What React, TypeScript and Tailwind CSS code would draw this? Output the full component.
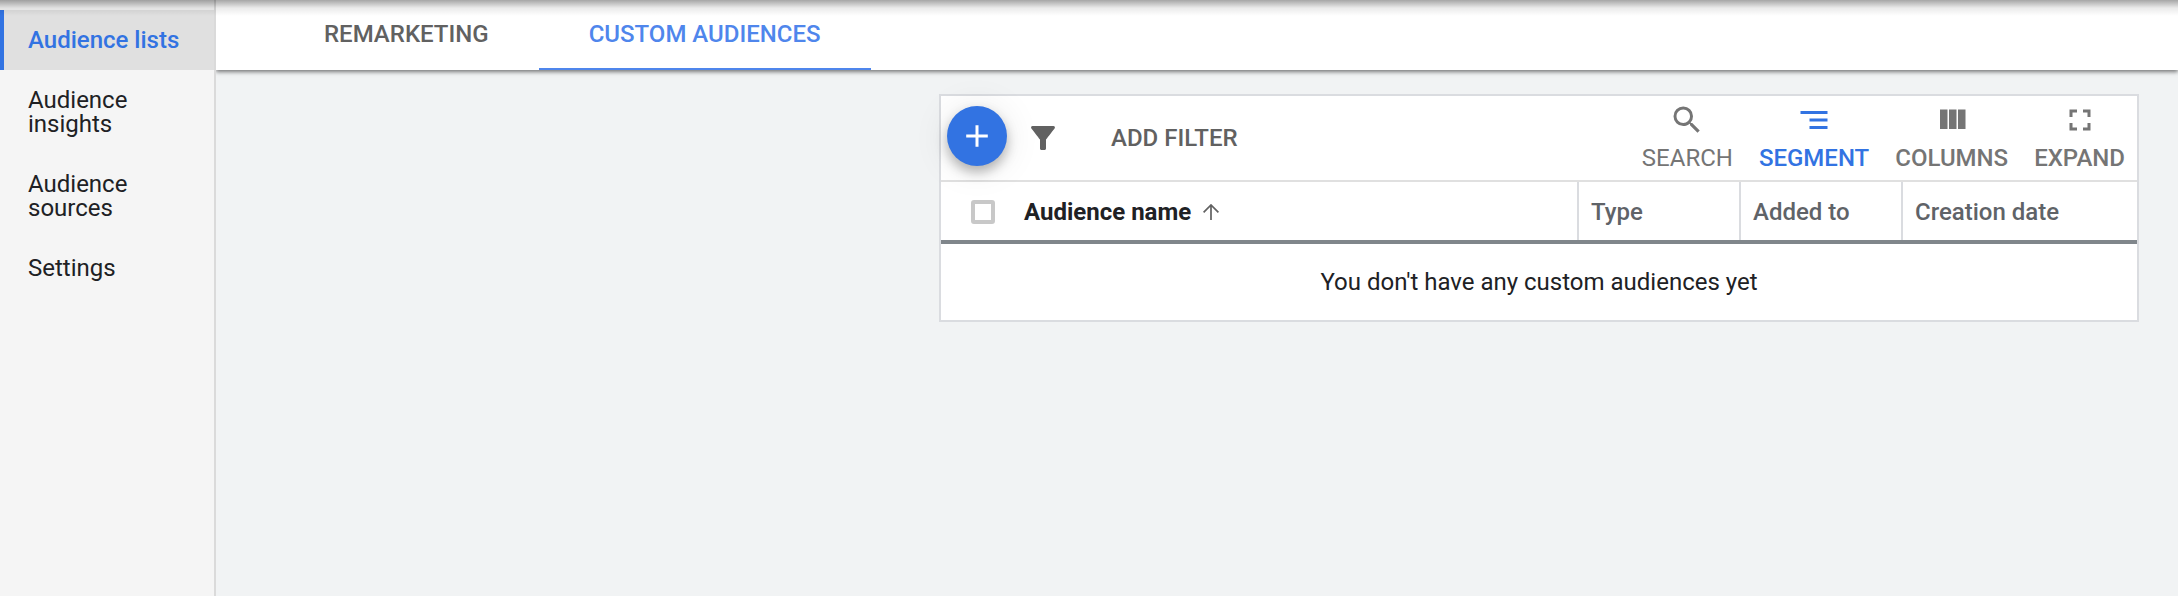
import React, { useState } from 'react';

const sideItems = ['Audience lists', 'Audience insights', 'Audience sources', 'Settings'];
const tabs = ['REMARKETING', 'CUSTOM AUDIENCES'];

const tools = [
  {
    label: 'SEARCH',
    className: 'text-[#757575]',
    path: 'M15.5 14h-.79l-.28-.27A6.47 6.47 0 0 0 16 9.5 6.5 6.5 0 1 0 9.5 16c1.61 0 3.09-.59 4.23-1.57l.27.28v.79l5 4.99L20.49 19l-4.99-5zm-6 0C7.01 14 5 11.99 5 9.5S7.01 5 9.5 5 14 7.01 14 9.5 11.99 14 9.5 14z',
  },
  {
    label: 'SEGMENT',
    className: 'font-medium text-[#3273e2]',
    path: 'M9 18h12v-2H9v2zM3 6v2h18V6H3zm6 7h12v-2H9v2z',
  },
  {
    label: 'COLUMNS',
    className: 'font-medium text-[#757575]',
    path: 'M10 18h5V5h-5v13zm-6 0h5V5H4v13zM16 5v13h5V5h-5z',
  },
  {
    label: 'EXPAND',
    className: 'font-medium text-[#757575]',
    path: 'M7 14H5v5h5v-2H7v-3zm-2-4h2V7h3V5H5v5zm12 7h-3v2h5v-5h-2v3zM14 5v2h3v3h2V5h-5z',
  },
];

const Icon: React.FC<{ path: string }> = ({ path }) => (
  <svg className="w-9 h-9 fill-current" viewBox="0 0 24 24" aria-hidden="true">
    <path d={path} />
  </svg>
);

const App: React.FC = () => {
  const [activeItem, setActiveItem] = useState('Audience lists');
  const [activeTab, setActiveTab] = useState('CUSTOM AUDIENCES');

  return (
    <div className="relative flex min-h-screen bg-[#f1f3f4] font-[Roboto,sans-serif] text-2xl/6 text-[#202124]">
      {/* shadow of the bar above the page */}
      <div className="pointer-events-none absolute inset-x-0 top-0 z-10 h-4 bg-linear-to-b from-black/35 via-black/8 to-transparent" />

      <nav className="relative z-[5] w-[216px] shrink-0 border-r-2 border-[#dadada] bg-[#f5f5f5] pt-[10px]">
        {sideItems.map((item) => (
          <a
            key={item}
            href="#"
            onClick={() => setActiveItem(item)}
            className={`block border-l-4 py-[18px] pl-6 pr-8 ${item === activeItem ? 'border-[#3273e2] bg-[#e0e0e0] font-medium text-[#3273e2] whitespace-nowrap' : 'border-transparent'}`}
          >
            {item}
          </a>
        ))}
      </nav>

      <main className="min-w-0 flex-1">
        <div className="flex h-[70px] bg-white pl-[58px] shadow-[0_2px_4px_rgba(0,0,0,0.5)]">
          {tabs.map((tab) => (
            <button
              key={tab}
              onClick={() => setActiveTab(tab)}
              className={`border-b-2 px-[50px] font-medium ${tab === activeTab ? 'border-[#4f86ec] text-[#4f86ec]' : 'border-transparent text-[#616161]'}`}
            >
              {tab}
            </button>
          ))}
        </div>

        <section className="mt-6 mr-[39px] ml-auto max-w-[1200px] border-2 border-[#dadce0] bg-white">
          <div className="flex h-[86px] items-start border-b-2 border-[#e0e0e0] pl-[6px] pr-3">
            <button
              aria-label="Add audience"
              className="mt-[10px] flex h-[60px] w-[60px] items-center justify-center rounded-full bg-[#3273e2] text-white shadow-[0_6px_12px_rgba(0,0,0,0.28),0_2px_36px_rgba(0,0,0,0.1)]"
            >
              <Icon path="M19.2 13H13v6.2h-2V13H4.8v-2H11V4.8h2V11h6.2v2z" />
            </button>
            <button aria-label="Filter" className="ml-[18px] self-center text-[#616161]">
              <Icon path="M4.25 5.61C6.27 8.2 10 13 10 13v6c0 .55.45 1 1 1h2c.55 0 1-.45 1-1v-6s3.72-4.8 5.74-7.39A.998.998 0 0 0 18.95 4H5.04c-.83 0-1.3.95-.79 1.61z" />
            </button>
            <button className="ml-[50px] self-center font-medium text-[#616161]">ADD FILTER</button>
            <div className="ml-auto flex gap-[26px] pt-[6px]">
              {tools.map((tool) => (
                <button key={tool.label} className={`flex flex-col items-center gap-2 ${tool.className}`}>
                  <Icon path={tool.path} />
                  {tool.label}
                </button>
              ))}
            </div>
          </div>

          <table className="w-full table-fixed text-left">
            <thead>
              <tr className="h-[60px] border-b-4 border-[#80868b] text-[#5f6368]">
                <th className="w-[83px] pt-0.5 pl-[30px]">
                  <input
                    type="checkbox"
                    aria-label="Select all audiences"
                    className="block h-6 w-6 appearance-none rounded-[3px] border-4 border-[#c8c8c8]"
                  />
                </th>
                <th className="pt-0.5 font-bold text-[#202124]">
                  <button className="flex items-center gap-3">
                    Audience name
                    <svg className="h-4 w-4" viewBox="0 0 16 16" fill="none" stroke="#616161" strokeWidth="1.7">
                      <path d="M8 16V1.2M.6 8.4 8 1l7.4 7.4" />
                    </svg>
                  </button>
                </th>
                <th className="w-[162px] border-l-2 border-[#dadce0] pt-0.5 pl-3 font-medium">Type</th>
                <th className="w-[162px] border-l-2 border-[#dadce0] pt-0.5 pl-3 font-medium">Added to</th>
                <th className="w-[235px] border-l-2 border-[#dadce0] pt-0.5 pl-3 font-medium">Creation date</th>
              </tr>
            </thead>
            <tbody>
              <tr className="h-[78px]">
                <td colSpan={5} className="text-center">
                  You don't have any custom audiences yet
                </td>
              </tr>
            </tbody>
          </table>
        </section>
      </main>
    </div>
  );
};

export default App;
